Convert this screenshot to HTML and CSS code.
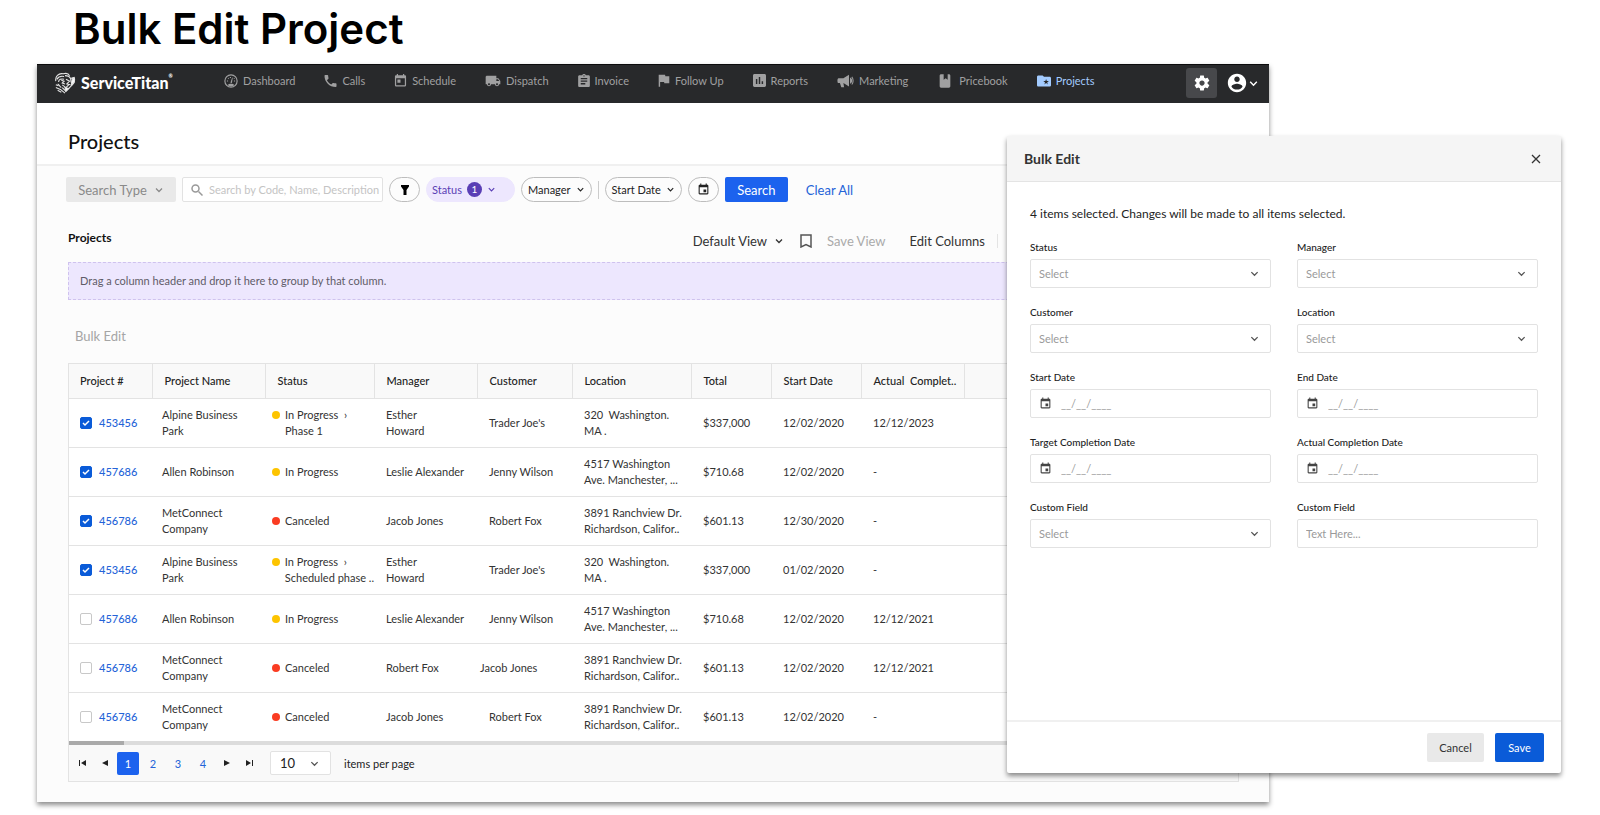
FILE: index.html
```html
<!DOCTYPE html>
<html lang="en">
<head>
  <meta charset="UTF-8">
  <meta name="viewport" content="width=device-width, initial-scale=1.0">
  <link rel="stylesheet" href="styles.css">
  <title>Bulk Edit Project</title>
</head>
<body>
  <!-- Shared icons -->
  <svg class="sprite" aria-hidden="true">
    <symbol id="i-chevron" viewBox="0 0 10 10"><path d="M2 3.5l3 3 3-3" fill="none" stroke="currentColor" stroke-width="1.3"/></symbol>
    <symbol id="i-calendar" viewBox="0 0 24 24"><path d="M17 12h-5v5h5v-5zM16 1v2H8V1H6v2H5c-1.1 0-2 .9-2 2v14c0 1.100.9 2 2 2h14c1.100 0 2-.9 2-2V5c0-1.100-.9-2-2-2h-1V1h-2zm3 18H5V8h14v11z" fill="currentColor"/></symbol>
  </svg>

  <h1 class="page-title">Bulk Edit Project</h1>

  <div class="stage">
    <div class="app">
      <!-- Top navigation -->
      <header class="navbar">
        <a class="logo" href="#">
          <svg class="logo-mark" viewBox="0 0 24 24" fill="none" stroke="#e4e4e4" stroke-width="1.2">
            <path d="M2 10C1 5 5 1 10 2c3-1 6 0 7 2" />
            <path d="M3 8c2-3 4-4 8-3M5 11c0-3 3-4 6-3M4 13c2 1 2 3 4 4M8 9l3 1-2 2 3 1" />
            <path d="M12 4c3 0 5 1 6 3l4-1c1 3 0 6-2 8l-7 7-4-4" />
            <path d="M13 8l4 2-3 3 4 1M18 7l1 5M9 14l4 3 3-3" />
            <path d="M2 14l3 1M2 17l5 2M4 20l4 2M7 19l5 4" />
            <path d="M20 7l2 0 0 4-3 3z" fill="#fff" />
            <path d="M12 17l4 1-3 3z" fill="#fff" />
          </svg>
          <span class="logo-text">ServiceTitan<small>®</small></span>
        </a>
        <nav class="nav-links">
          <a href="#"><svg width="14" height="14" viewBox="0 0 24 24"><circle cx="12" cy="12" r="10.500" fill="none" stroke="currentColor" stroke-width="2"/><path d="M6 19c3-3 9-3 12 0-3 3-9 3-12 0zM11 15l3-9 1 .5-1.500 9z" fill="currentColor"/><path d="M5 12h2M7 7l1 1M17 8l1-1M17 12h2M11 5v2" stroke="currentColor" stroke-width="2"/></svg>Dashboard</a>
          <a href="#"><svg width="13" height="12" viewBox="3 3 18 18"><path d="M6.620 10.790c1.440 2.830 3.760 5.140 6.590 6.590l2.200-2.200c.27-.27.67-.36 1.020-.24 1.120.37 2.330.57 3.570.57.55 0 1 .45 1 1V20c0 .55-.45 1-1 1-9.390 0-17-7.610-17-17 0-.55.45-1 1-1h3.500c.55 0 1 .45 1 1 0 1.250.2 2.450.57 3.570.11.35.03.74-.25 1.020l-2.200 2.200z" fill="currentColor"/></svg>Calls</a>
          <a href="#"><svg width="13" height="13" viewBox="3 1 18 21"><path d="M19 3h-1V1h-2v2H8V1H6v2H5c-1.110 0-2 .9-2 2v14c0 1.100.89 2 2 2h14c1.100 0 2-.9 2-2V5c0-1.100-.9-2-2-2zm0 16H5V8h14v11zM7 10h5v5H7z" fill="currentColor"/></svg>Schedule</a>
          <a href="#"><svg width="16" height="16" viewBox="0 0 24 24"><path d="M20 8h-3V4H3c-1.100 0-2 .9-2 2v11h2c0 1.660 1.340 3 3 3s3-1.340 3-3h6c0 1.660 1.340 3 3 3s3-1.340 3-3h2v-5l-3-4zM6 18.500c-.83 0-1.500-.67-1.500-1.500s.67-1.500 1.500-1.500 1.500.67 1.500 1.500-.67 1.500-1.500 1.500zm13.500-9l1.960 2.500H17V9.500h2.500zm-1.500 9c-.83 0-1.500-.67-1.500-1.500s.67-1.500 1.500-1.500 1.500.67 1.500 1.500-.67 1.500-1.500 1.500z" fill="currentColor"/></svg>Dispatch</a>
          <a href="#"><svg width="12" height="13" viewBox="3 1 18 20"><path d="M19 3h-4.180C14.400 1.840 13.300 1 12 1c-1.300 0-2.400.84-2.820 2H5c-1.100 0-2 .9-2 2v14c0 1.100.9 2 2 2h14c1.100 0 2-.9 2-2V5c0-1.100-.9-2-2-2zm-7 0c.55 0 1 .45 1 1s-.45 1-1 1-1-.45-1-1 .45-1 1-1zm2 14H7v-2h7v2zm3-4H7v-2h10v2zm0-4H7V7h10v2z" fill="currentColor"/></svg>Invoice</a>
          <a href="#"><svg width="12" height="13" viewBox="4 3 17 18"><path d="M14.400 6L14 4H5v17h2v-7h5.600l.4 2h7V6z" fill="currentColor"/></svg>Follow Up</a>
          <a href="#"><svg width="13" height="13" viewBox="3 3 18 18"><path d="M19 3H5c-1.100 0-2 .9-2 2v14c0 1.100.9 2 2 2h14c1.100 0 2-.9 2-2V5c0-1.100-.9-2-2-2zM9 17H7v-7h2v7zm4 0h-2V7h2v10zm4 0h-2v-4h2v4z" fill="currentColor"/></svg>Reports</a>
          <a href="#"><svg width="17" height="14" viewBox="0 0 24 20"><path d="M2 6h7l8-5v17l-8-5 1 6H6l-2-6H2C0 13 0 6 2 6zM18.500 5c4 1 4 8 0 9z" fill="currentColor"/><path d="M21 4c2.500 3 2.500 8 0 11" fill="none" stroke="currentColor" stroke-width="1.500"/></svg>Marketing</a>
          <a class="wide" href="#"><svg width="12" height="14" viewBox="0 0 18 20"><path d="M3 0h4v8l3-2 3 2V0h2c1 0 2 1 2 2v16c0 1-1 2-2 2H3c-1 0-2-1-2-2V2c0-1 1-2 2-2z" fill="currentColor"/></svg>Pricebook</a>
          <a class="active" href="#"><svg width="14" height="12" viewBox="2 4 20 16"><path fill-rule="evenodd" d="M20 6h-8l-2-2H4c-1.100 0-2 .9-2 2v12c0 1.100.9 2 2 2h16c1.100 0 2-.9 2-2V8c0-1.100-.9-2-2-2zM15 9l1 3h3l-2.500 2 1 3-2.500-2-2.500 2 1-3-2.500-2h3z" fill="currentColor"/></svg>Projects</a>
        </nav>
        <div class="nav-tools">
          <button class="gear" type="button" aria-label="Settings"><svg width="18" height="18" viewBox="0 0 24 24"><path d="M19.430 12.980c.04-.32.07-.64.07-.98s-.03-.66-.07-.98l2.110-1.650c.19-.15.24-.42.12-.64l-2-3.460c-.12-.22-.39-.3-.61-.22l-2.490 1c-.52-.4-1.080-.73-1.690-.98l-.38-2.650C14.460 2.180 14.250 2 14 2h-4c-.25 0-.46.18-.49.42l-.38 2.650c-.61.25-1.170.59-1.690.98l-2.490-1c-.23-.09-.49 0-.61.22l-2 3.460c-.13.22-.07.49.12.64l2.110 1.650c-.04.32-.07.65-.07.98s.03.66.07.98l-2.110 1.650c-.19.15-.24.42-.12.64l2 3.460c.12.22.39.3.61.22l2.490-1c.52.4 1.080.73 1.690.98l.38 2.650c.03.24.24.42.49.42h4c.25 0 .46-.18.49-.42l.38-2.650c.61-.25 1.170-.59 1.690-.98l2.490 1c.23.09.49 0 .61-.22l2-3.460c.12-.22.07-.49-.12-.64l-2.110-1.650zM12 15.500c-1.930 0-3.500-1.570-3.500-3.500s1.570-3.500 3.500-3.500 3.500 1.570 3.500 3.500-1.570 3.500-3.500 3.500z" fill="currentColor"/></svg></button>
          <button class="account" type="button" aria-label="Account"><svg width="22" height="22" viewBox="0 0 24 24"><path d="M12 2C6.480 2 2 6.480 2 12s4.480 10 10 10 10-4.480 10-10S17.520 2 12 2zm0 3c1.660 0 3 1.340 3 3s-1.340 3-3 3-3-1.340-3-3 1.340-3 3-3zm0 14.200c-2.500 0-4.710-1.280-6-3.220.03-1.990 4-3.080 6-3.080 1.990 0 5.970 1.090 6 3.080-1.290 1.940-3.500 3.220-6 3.220z" fill="currentColor"/></svg><svg width="11" height="11"><use href="#i-chevron"/></svg></button>
        </div>
      </header>

      <div class="heading"><h2>Projects</h2></div>

      <main class="content">
        <!-- Search filters -->
        <form class="filters">
          <button class="search-type" type="button">Search Type <svg width="10" height="10"><use href="#i-chevron"/></svg></button>
          <label class="search-box">
            <svg width="12" height="12" viewBox="0 0 12 12" fill="none" stroke="#999" stroke-width="1.500"><circle cx="4.500" cy="4.500" r="3.500"/><path d="M7.500 7.500l4 4"/></svg>
            <input type="text" aria-label="Search" placeholder="Search by Code, Name, Description">
          </label>
          <button class="pill icon-pill" type="button" aria-label="Filter"><svg width="10" height="10" viewBox="0 0 10 10"><path d="M1 0h8v1.500L6.500 5v5h-3V5L1 1.500z"/></svg></button>
          <button class="pill status-pill" type="button">Status <span class="count">1</span> <svg width="9" height="9"><use href="#i-chevron"/></svg></button>
          <button class="pill" type="button">Manager <svg width="9" height="9"><use href="#i-chevron"/></svg></button>
          <span class="divider"></span>
          <button class="pill" type="button">Start Date <svg width="9" height="9"><use href="#i-chevron"/></svg></button>
          <button class="pill icon-pill" type="button" aria-label="Calendar"><svg width="13" height="13"><use href="#i-calendar"/></svg></button>
          <button class="search-btn" type="submit">Search</button>
          <a class="clear" href="#">Clear All</a>
        </form>

        <div class="toolbar">
          <h3>Projects</h3>
          <div class="view-tools">
            <button type="button">Default View <svg width="10" height="10"><use href="#i-chevron"/></svg></button>
            <button class="muted" type="button"><svg width="12" height="14" viewBox="0 0 12 14"><path d="M1 1h10v12L6 10.500 1 13z" fill="none" stroke="#555" stroke-width="1.500"/></svg>Save View</button>
            <button type="button">Edit Columns</button>
            <span class="divider"></span>
          </div>
        </div>

        <div class="group-drop">Drag a column header and drop it here to group by that column.</div>
        <button class="bulk-edit" type="button">Bulk Edit</button>

        <div class="grid">
          <table>
            <colgroup>
              <col class="c-num"><col class="c-name"><col class="c-status"><col class="c-manager"><col class="c-customer"><col class="c-location"><col class="c-total"><col class="c-start"><col class="c-actual"><col>
            </colgroup>
            <thead>
              <tr><th>Project #</th><th>Project Name</th><th>Status</th><th>Manager</th><th>Customer</th><th>Location</th><th>Total</th><th>Start Date</th><th>Actual&nbsp; Complet..</th><th></th></tr>
            </thead>
            <tbody>
              <tr>
                <td><label class="pick"><input type="checkbox" checked><a href="#">453456</a></label></td>
                <td>Alpine Business<br>Park</td>
                <td><div class="status"><span class="dot"></span><span>In Progress&nbsp; ›<br>Phase 1</span></div></td>
                <td>Esther<br>Howard</td><td>Trader Joe's</td><td>320&nbsp; Washington.<br>MA .</td><td>$337,000</td><td>12/02/2020</td><td>12/12/2023</td><td></td>
              </tr>
              <tr>
                <td><label class="pick"><input type="checkbox" checked><a href="#">457686</a></label></td>
                <td>Allen Robinson</td>
                <td><div class="status"><span class="dot"></span><span>In Progress</span></div></td>
                <td>Leslie Alexander</td><td>Jenny Wilson</td><td>4517 Washington<br>Ave. Manchester, ...</td><td>$710.68</td><td>12/02/2020</td><td>-</td><td></td>
              </tr>
              <tr>
                <td><label class="pick"><input type="checkbox" checked><a href="#">456786</a></label></td>
                <td>MetConnect<br>Company</td>
                <td><div class="status"><span class="dot red"></span><span>Canceled</span></div></td>
                <td>Jacob Jones</td><td>Robert Fox</td><td>3891 Ranchview Dr.<br>Richardson, Califor..</td><td>$601.13</td><td>12/30/2020</td><td>-</td><td></td>
              </tr>
              <tr>
                <td><label class="pick"><input type="checkbox" checked><a href="#">453456</a></label></td>
                <td>Alpine Business<br>Park</td>
                <td><div class="status"><span class="dot"></span><span>In Progress&nbsp; ›<br>Scheduled phase ..</span></div></td>
                <td>Esther<br>Howard</td><td>Trader Joe's</td><td>320&nbsp; Washington.<br>MA .</td><td>$337,000</td><td>01/02/2020</td><td>-</td><td></td>
              </tr>
              <tr>
                <td><label class="pick"><input type="checkbox"><a href="#">457686</a></label></td>
                <td>Allen Robinson</td>
                <td><div class="status"><span class="dot"></span><span>In Progress</span></div></td>
                <td>Leslie Alexander</td><td>Jenny Wilson</td><td>4517 Washington<br>Ave. Manchester, ...</td><td>$710.68</td><td>12/02/2020</td><td>12/12/2021</td><td></td>
              </tr>
              <tr>
                <td><label class="pick"><input type="checkbox"><a href="#">456786</a></label></td>
                <td>MetConnect<br>Company</td>
                <td><div class="status"><span class="dot red"></span><span>Canceled</span></div></td>
                <td>Robert Fox</td><td class="tight">Jacob Jones</td><td>3891 Ranchview Dr.<br>Richardson, Califor..</td><td>$601.13</td><td>12/02/2020</td><td>12/12/2021</td><td></td>
              </tr>
              <tr>
                <td><label class="pick"><input type="checkbox"><a href="#">456786</a></label></td>
                <td>MetConnect<br>Company</td>
                <td><div class="status"><span class="dot red"></span><span>Canceled</span></div></td>
                <td>Jacob Jones</td><td>Robert Fox</td><td>3891 Ranchview Dr.<br>Richardson, Califor..</td><td>$601.13</td><td>12/02/2020</td><td>-</td><td></td>
              </tr>
            </tbody>
          </table>
          <div class="scrollbar"><div class="thumb"></div></div>
          <div class="pager">
            <button class="step" type="button" aria-label="First page"><svg width="8" height="8" viewBox="0 0 8 8"><path d="M0 1h1v6H0zM7 1v6L2 4z"/></svg></button>
            <button class="step" type="button" aria-label="Previous page"><svg width="8" height="8" viewBox="0 0 8 8"><path d="M7 1v6L1 4z"/></svg></button>
            <button class="current" type="button">1</button>
            <button type="button">2</button>
            <button type="button">3</button>
            <button type="button">4</button>
            <button class="step" type="button" aria-label="Next page"><svg width="8" height="8" viewBox="0 0 8 8"><path d="M1 1v6l6-3z"/></svg></button>
            <button class="step" type="button" aria-label="Last page"><svg width="8" height="8" viewBox="0 0 8 8"><path d="M1 1v6l5-3zM7 1h1v6H7z"/></svg></button>
            <select id="page-size"><option>10</option></select>
            <label for="page-size">items per page</label>
          </div>
        </div>
      </main>
    </div>

    <!-- Bulk edit dialog -->
    <section class="dialog" role="dialog" aria-labelledby="dialog-title">
      <header class="dialog-head">
        <h2 id="dialog-title">Bulk Edit</h2>
        <button type="button" aria-label="Close"><svg width="10" height="10" viewBox="0 0 10 10"><path d="M1 1l8 8M9 1L1 9" fill="none" stroke="#333" stroke-width="1.300"/></svg></button>
      </header>
      <form class="dialog-body" id="bulk-form">
        <p>4 items selected. Changes will be made to all items selected.</p>
        <div class="fields">
          <div class="field"><label for="f-status">Status</label><select id="f-status"><option>Select</option></select></div>
          <div class="field"><label for="f-manager">Manager</label><select id="f-manager"><option>Select</option></select></div>
          <div class="field"><label for="f-customer">Customer</label><select id="f-customer"><option>Select</option></select></div>
          <div class="field"><label for="f-location">Location</label><select id="f-location"><option>Select</option></select></div>
          <div class="field"><label for="f-start">Start Date</label><div class="date"><svg width="13" height="13"><use href="#i-calendar"/></svg><input id="f-start" type="text" placeholder="__/__/____"></div></div>
          <div class="field"><label for="f-end">End Date</label><div class="date"><svg width="13" height="13"><use href="#i-calendar"/></svg><input id="f-end" type="text" placeholder="__/__/____"></div></div>
          <div class="field"><label for="f-target">Target Completion Date</label><div class="date"><svg width="13" height="13"><use href="#i-calendar"/></svg><input id="f-target" type="text" placeholder="__/__/____"></div></div>
          <div class="field"><label for="f-actual">Actual Completion Date</label><div class="date"><svg width="13" height="13"><use href="#i-calendar"/></svg><input id="f-actual" type="text" placeholder="__/__/____"></div></div>
          <div class="field"><label for="f-custom1">Custom Field</label><select id="f-custom1"><option>Select</option></select></div>
          <div class="field"><label for="f-custom2">Custom Field</label><input id="f-custom2" type="text" placeholder="Text Here..."></div>
        </div>
      </form>
      <footer class="dialog-foot">
        <button class="cancel" type="button">Cancel</button>
        <button class="save" type="submit" form="bulk-form">Save</button>
      </footer>
    </section>
  </div>
</body>
</html>
```
FILE: styles.css
```css
/* General Styles */
* {
  box-sizing: border-box;
}

body {
  margin: 0;
  background: #fff;
  color: #333;
  font-family: Lato, sans-serif;
  font-size: 11px;
}

h1, h2, h3, p {
  margin: 0;
}

button, input, select {
  font: inherit;
  color: inherit;
}

button {
  display: flex;
  align-items: center;
  justify-content: center;
  padding: 0;
  border: 0;
  background: none;
  white-space: nowrap;
}

a {
  color: #2463d8;
  text-decoration: none;
}

.sprite {
  display: none;
}

.page-title {
  padding: 4px 0 0 73px;
  font-family: Inter, sans-serif;
  font-size: 42px;
  line-height: 50px;
  height: 64px;
  font-weight: 600;
  color: #000;
}

.stage {
  position: relative;
  margin: 0 39px 12px 37px;
}

.app {
  margin-right: 292px;
  background: #fcfcfc;
  box-shadow: 0 3px 5px rgba(0, 0, 0, 0.45);
}

/* Navigation */
.navbar {
  display: flex;
  align-items: center;
  height: 39px;
  padding: 0 10px 0 17px;
  background: #28292b;
  border-top: 1px solid #0c0c0d;
}

.logo {
  display: flex;
  align-items: center;
  gap: 5px;
  width: 170px;
  padding-bottom: 3px;
  color: #fff;
}

.logo-mark {
  width: 22px;
  height: 22px;
}

.logo-text {
  font-size: 16px;
  font-weight: 900;
}

.logo-text small {
  font-size: 5px;
  vertical-align: top;
}

.nav-links {
  display: flex;
  align-items: center;
  gap: 29px;
  padding-bottom: 7px;
}

.nav-links a {
  display: flex;
  align-items: center;
  gap: 5px;
  color: #a0a0a1;
  white-space: nowrap;
}

.nav-links .wide {
  gap: 8px;
  margin-left: 2px;
}

.nav-links .active {
  color: #a3cbff;
}

.nav-tools {
  display: flex;
  align-items: center;
  gap: 9px;
  margin-left: auto;
  padding-bottom: 2px;
  color: #fff;
}

.gear {
  width: 31px;
  height: 30px;
  border-radius: 3px;
  background: #47484b;
}

.heading {
  display: flex;
  align-items: center;
  height: 63px;
  padding: 14px 31px 0;
  background: #fff;
  border-bottom: 2px solid #f0f0f0;
}

.heading h2 {
  font-size: 20px;
  line-height: 46px;
  font-weight: 500;
  color: #111;
}

.content {
  padding: 11px 30px 20px 31px;
}

/* Filters */
.filters {
  display: flex;
  align-items: center;
  gap: 6px;
  margin-left: -2px;
}

.search-type {
  gap: 7px;
  width: 110px;
  height: 25px;
  border-radius: 2px;
  background: #e9e9e9;
  color: #8a8a8a;
  font-size: 13px;
}

.search-box {
  display: flex;
  align-items: center;
  gap: 6px;
  width: 201px;
  height: 25px;
  padding-left: 8px;
  border: 1px solid #e2e2e2;
  border-radius: 2px;
  background: #fff;
}

.search-box input {
  flex: 1;
  min-width: 0;
  padding: 0;
  border: 0;
  outline: 0;
  background: none;
}

.search-box ::placeholder {
  color: #c4c4c4;
}

.pill {
  gap: 5px;
  height: 25px;
  padding: 0 6px;
  border: 1px solid #bdbdbd;
  border-radius: 13px;
  color: #222;
}

.icon-pill {
  width: 31px;
}

.status-pill {
  justify-content: flex-start;
  width: 89px;
  padding: 0 5px;
  border-color: #ede7fe;
  background: #ede7fe;
  color: #5a3fb5;
}

.count {
  width: 15px;
  border-radius: 50%;
  background: #5a3fb5;
  color: #fff;
  font-size: 10px;
  line-height: 15px;
}

.divider {
  width: 1px;
  height: 18px;
  background: #ccc;
}

.search-btn {
  width: 63px;
  height: 25px;
  border-radius: 2px;
  background: #1c62ee;
  color: #fff;
  font-size: 13px;
}

.clear {
  margin-left: 12px;
  font-size: 13px;
}

.toolbar {
  display: flex;
  justify-content: space-between;
  height: 60px;
  padding: 28px 241px 0 0;
}

.toolbar h3 {
  font-size: 12px;
  line-height: 16px;
  font-weight: 700;
  color: #111;
}

.view-tools {
  display: flex;
  align-items: center;
  gap: 24px;
  height: 22px;
  font-size: 13px;
}

.view-tools button {
  gap: 7px;
}

.view-tools .muted {
  gap: 15px;
  margin-left: -8px;
  color: #aaa;
}

.view-tools .divider {
  height: 14px;
  margin-left: -12px;
  background: #e4e4e4;
}

.group-drop {
  padding: 0 11px;
  border: 1px dashed #cfc2ee;
  background: #ede7fe;
  line-height: 36px;
  color: #5f5c68;
}

.bulk-edit {
  margin: 28px 0 19px 7px;
  font-size: 13px;
  line-height: 16px;
  color: #a5a5a5;
}

/* Projects table */
.grid {
  border: 1px solid #e3e3e3;
  background: #f9f9f9;
}

table {
  width: 100%;
  table-layout: fixed;
  border-collapse: collapse;
}

.c-num { width: 83px; }
.c-name { width: 113px; }
.c-status { width: 109px; }
.c-manager { width: 103px; }
.c-customer { width: 95px; }
.c-location { width: 119px; }
.c-total { width: 80px; }
.c-start { width: 90px; }
.c-actual { width: 103px; }

th {
  height: 34px;
  padding: 0 0 0 12px;
  border-right: 1px solid #e3e3e3;
  text-align: left;
  font-weight: 500;
  color: #222;
  white-space: nowrap;
}

th:last-child {
  border-right: 0;
}

td {
  height: 49px;
  padding: 0 0 0 12px;
  border-top: 1px solid #e3e3e3;
  background: #fff;
  line-height: 16px;
  white-space: nowrap;
}

th:first-child,
td:first-child {
  padding-left: 11px;
}

td:nth-child(2) {
  padding-left: 10px;
}

td:nth-child(3) {
  padding-left: 7px;
}

td.tight {
  padding-left: 3px;
}

.pick {
  display: flex;
  align-items: center;
  gap: 7px;
}

.pick input {
  width: 12px;
  height: 12px;
  margin: 0;
  appearance: none;
  border: 1px solid #c8c8c8;
  border-radius: 2px;
  background: #fff;
}

.pick input:checked {
  border-color: #0a5bd8;
  background: #0a5bd8 url("data:image/svg+xml,%3Csvg xmlns='http://www.w3.org/2000/svg' viewBox='0 0 10 10'%3E%3Cpath d='M2 5l2 2 4-4' fill='none' stroke='white' stroke-width='1.500'/%3E%3C/svg%3E") center / 10px no-repeat;
}

.pick a {
  font-weight: 500;
}

.status {
  display: flex;
  gap: 5px;
}

.dot {
  width: 8px;
  height: 8px;
  margin-top: 4px;
  border-radius: 50%;
  background: #fdc400;
}

.dot.red {
  background: #fa3c22;
}

.scrollbar {
  height: 4px;
  background: #dcdcdc;
}

.thumb {
  width: 55px;
  height: 4px;
  background: #aaa;
}

.pager {
  display: flex;
  align-items: center;
  gap: 3px;
  height: 36px;
  padding: 0 4px;
  color: #222;
}

.pager button {
  width: 22px;
  height: 23px;
  border-radius: 2px;
  color: #2463d8;
}

.pager .step {
  width: 19px;
}

.pager button svg {
  fill: #222;
}

.pager .current {
  background: #1c62ee;
  color: #fff;
}

/* Form controls */
select {
  appearance: none;
  border: 1px solid #e2e2e2;
  border-radius: 2px;
  background: #fff url("data:image/svg+xml,%3Csvg xmlns='http://www.w3.org/2000/svg' viewBox='0 0 10 10'%3E%3Cpath d='M1.500 3.500l3.500 3.500 3.500-3.500' fill='none' stroke='%23555' stroke-width='1.400'/%3E%3C/svg%3E") right 11px center / 9px no-repeat;
}

.pager select {
  width: 61px;
  height: 24px;
  margin: 0 10px 0 9px;
  padding: 0 9px;
  font-size: 13px;
}

/* Bulk edit dialog */
.dialog {
  position: absolute;
  top: 72px;
  right: 0;
  bottom: 29px;
  display: flex;
  flex-direction: column;
  width: 100%;
  max-width: 554px;
  border-radius: 2px;
  background: #fff;
  box-shadow: 0 3px 5px rgba(0, 0, 0, 0.45);
}

.dialog-head {
  display: flex;
  align-items: center;
  justify-content: space-between;
  height: 46px;
  padding: 0 20px 0 17px;
  border-bottom: 1px solid #e4e4e4;
  background: #f5f5f5;
}

.dialog-head h2 {
  font-size: 14px;
  font-weight: 700;
}

.dialog-body {
  flex: 1;
  padding: 23px;
}

.dialog-body p {
  font-size: 12px;
  line-height: 18px;
  color: #222;
}

.fields {
  display: grid;
  grid-template-columns: 1fr 1fr;
  gap: 16px 26px;
  margin-top: 16px;
}

.field {
  display: flex;
  flex-direction: column;
  gap: 4px;
}

.field label {
  line-height: 16px;
  font-size: 10px;
  font-weight: 500;
  color: #222;
}

.field select,
.field > input,
.date {
  width: 100%;
  height: 29px;
  padding: 0 8px;
  border: 1px solid #e2e2e2;
  border-radius: 2px;
  color: #9a9a9a;
}

.date {
  display: flex;
  align-items: center;
  gap: 9px;
}

.date svg {
  color: #444;
}

.date input {
  flex: 1;
  min-width: 0;
  padding: 0;
  border: 0;
  outline: 0;
}

.field ::placeholder {
  color: #9a9a9a;
}

.dialog-foot {
  display: flex;
  justify-content: flex-end;
  gap: 11px;
  padding: 11px 17px;
  border-top: 2px solid #f0f0f0;
}

.dialog-foot button {
  width: 57px;
  height: 29px;
  border-radius: 2px;
  background: #e9e9e9;
}

.dialog-foot .save {
  width: 49px;
  background: #0a5bd8;
  color: #fff;
}
```
